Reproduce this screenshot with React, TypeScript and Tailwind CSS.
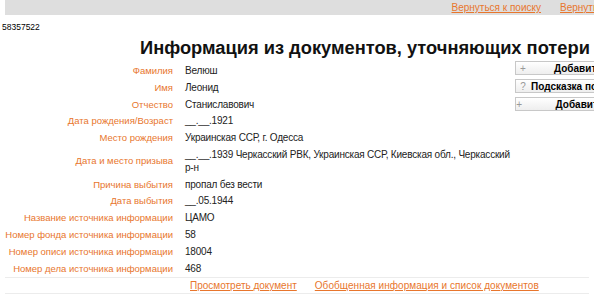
import React from "react";

const rows: { label: string; value: string }[] = [
  { label: "Фамилия", value: "Велюш" },
  { label: "Имя", value: "Леонид" },
  { label: "Отчество", value: "Станиславович" },
  { label: "Дата рождения/Возраст", value: "__.__.1921" },
  { label: "Место рождения", value: "Украинская ССР, г. Одесса" },
  {
    label: "Дата и место призыва",
    value: "__.__.1939 Черкасский РВК, Украинская ССР, Киевская обл., Черкасский р-н",
  },
  { label: "Причина выбытия", value: "пропал без вести" },
  { label: "Дата выбытия", value: "__.05.1944" },
  { label: "Название источника информации", value: "ЦАМО" },
  { label: "Номер фонда источника информации", value: "58" },
  { label: "Номер описи источника информации", value: "18004" },
  { label: "Номер дела источника информации", value: "468" },
];

const buttons = [
  { icon: "+", label: "Добавить", pad: "pl-[24px]" },
  { icon: "?", label: "Подсказка по", pad: "pl-[1px]" },
  { icon: "+", label: "Добавить", pad: "pl-[33px]" },
];

const link = "text-[#e8762d] underline text-[10px]";

export default function App() {
  return (
    <div className="w-[594px] h-[295px] overflow-hidden bg-white font-['Liberation_Sans',Arial,sans-serif] text-[10px] text-[#222]">
      {/* Top bar */}
      <div className="ml-[5px] h-[15px] bg-[#dedede] flex items-center justify-end gap-[19px] whitespace-nowrap">
        <a className={link}>Вернуться к поиску</a>
        <a className={`${link} w-[34px] overflow-hidden`}>Вернуться</a>
      </div>

      <div className="pl-[2px] pt-[7px] text-[8.5px] leading-[10px] text-black">58357522</div>

      <h1 className="pl-[140px] pt-[6px] text-[18.3px] leading-[20px] font-bold text-[#111] whitespace-nowrap">
        Информация из документов, уточняющих потери
      </h1>

      <div className="flex mt-[5px]">
        <div className="w-[515px] shrink-0">
          {rows.map((r) => (
            <div key={r.label} className="flex items-center leading-[12.8px] py-[2px]">
              <div className="w-[173px] shrink-0 text-right text-[#e8762d] text-[9.5px] whitespace-nowrap">
                {r.label}
              </div>
              <div className="ml-[12px] w-[326px] tracking-[-0.2px] text-[#222]">{r.value}</div>
            </div>
          ))}
        </div>

        <div className="flex flex-col gap-[4px] -mt-[2px] w-[90px] shrink-0">
          {buttons.map((b, i) => (
            <div
              key={i}
              className="h-[14px] border border-[#c8c8c8] bg-gradient-to-b from-white to-[#eeeeee] flex items-center whitespace-nowrap overflow-hidden font-bold text-black"
            >
              <span className="w-[14px] text-center font-normal text-[#999]">{b.icon}</span>
              <span className={b.pad}>{b.label}</span>
            </div>
          ))}
        </div>
      </div>

      <div className="mx-[5px] border-y border-[#ececec] flex gap-[18px] pl-[185px] h-[17px] items-center whitespace-nowrap">
        <a className={link}>Просмотреть документ</a>
        <a className={`${link} tracking-[0.05px]`}>Обобщенная информация и список документов</a>
      </div>
    </div>
  );
}
